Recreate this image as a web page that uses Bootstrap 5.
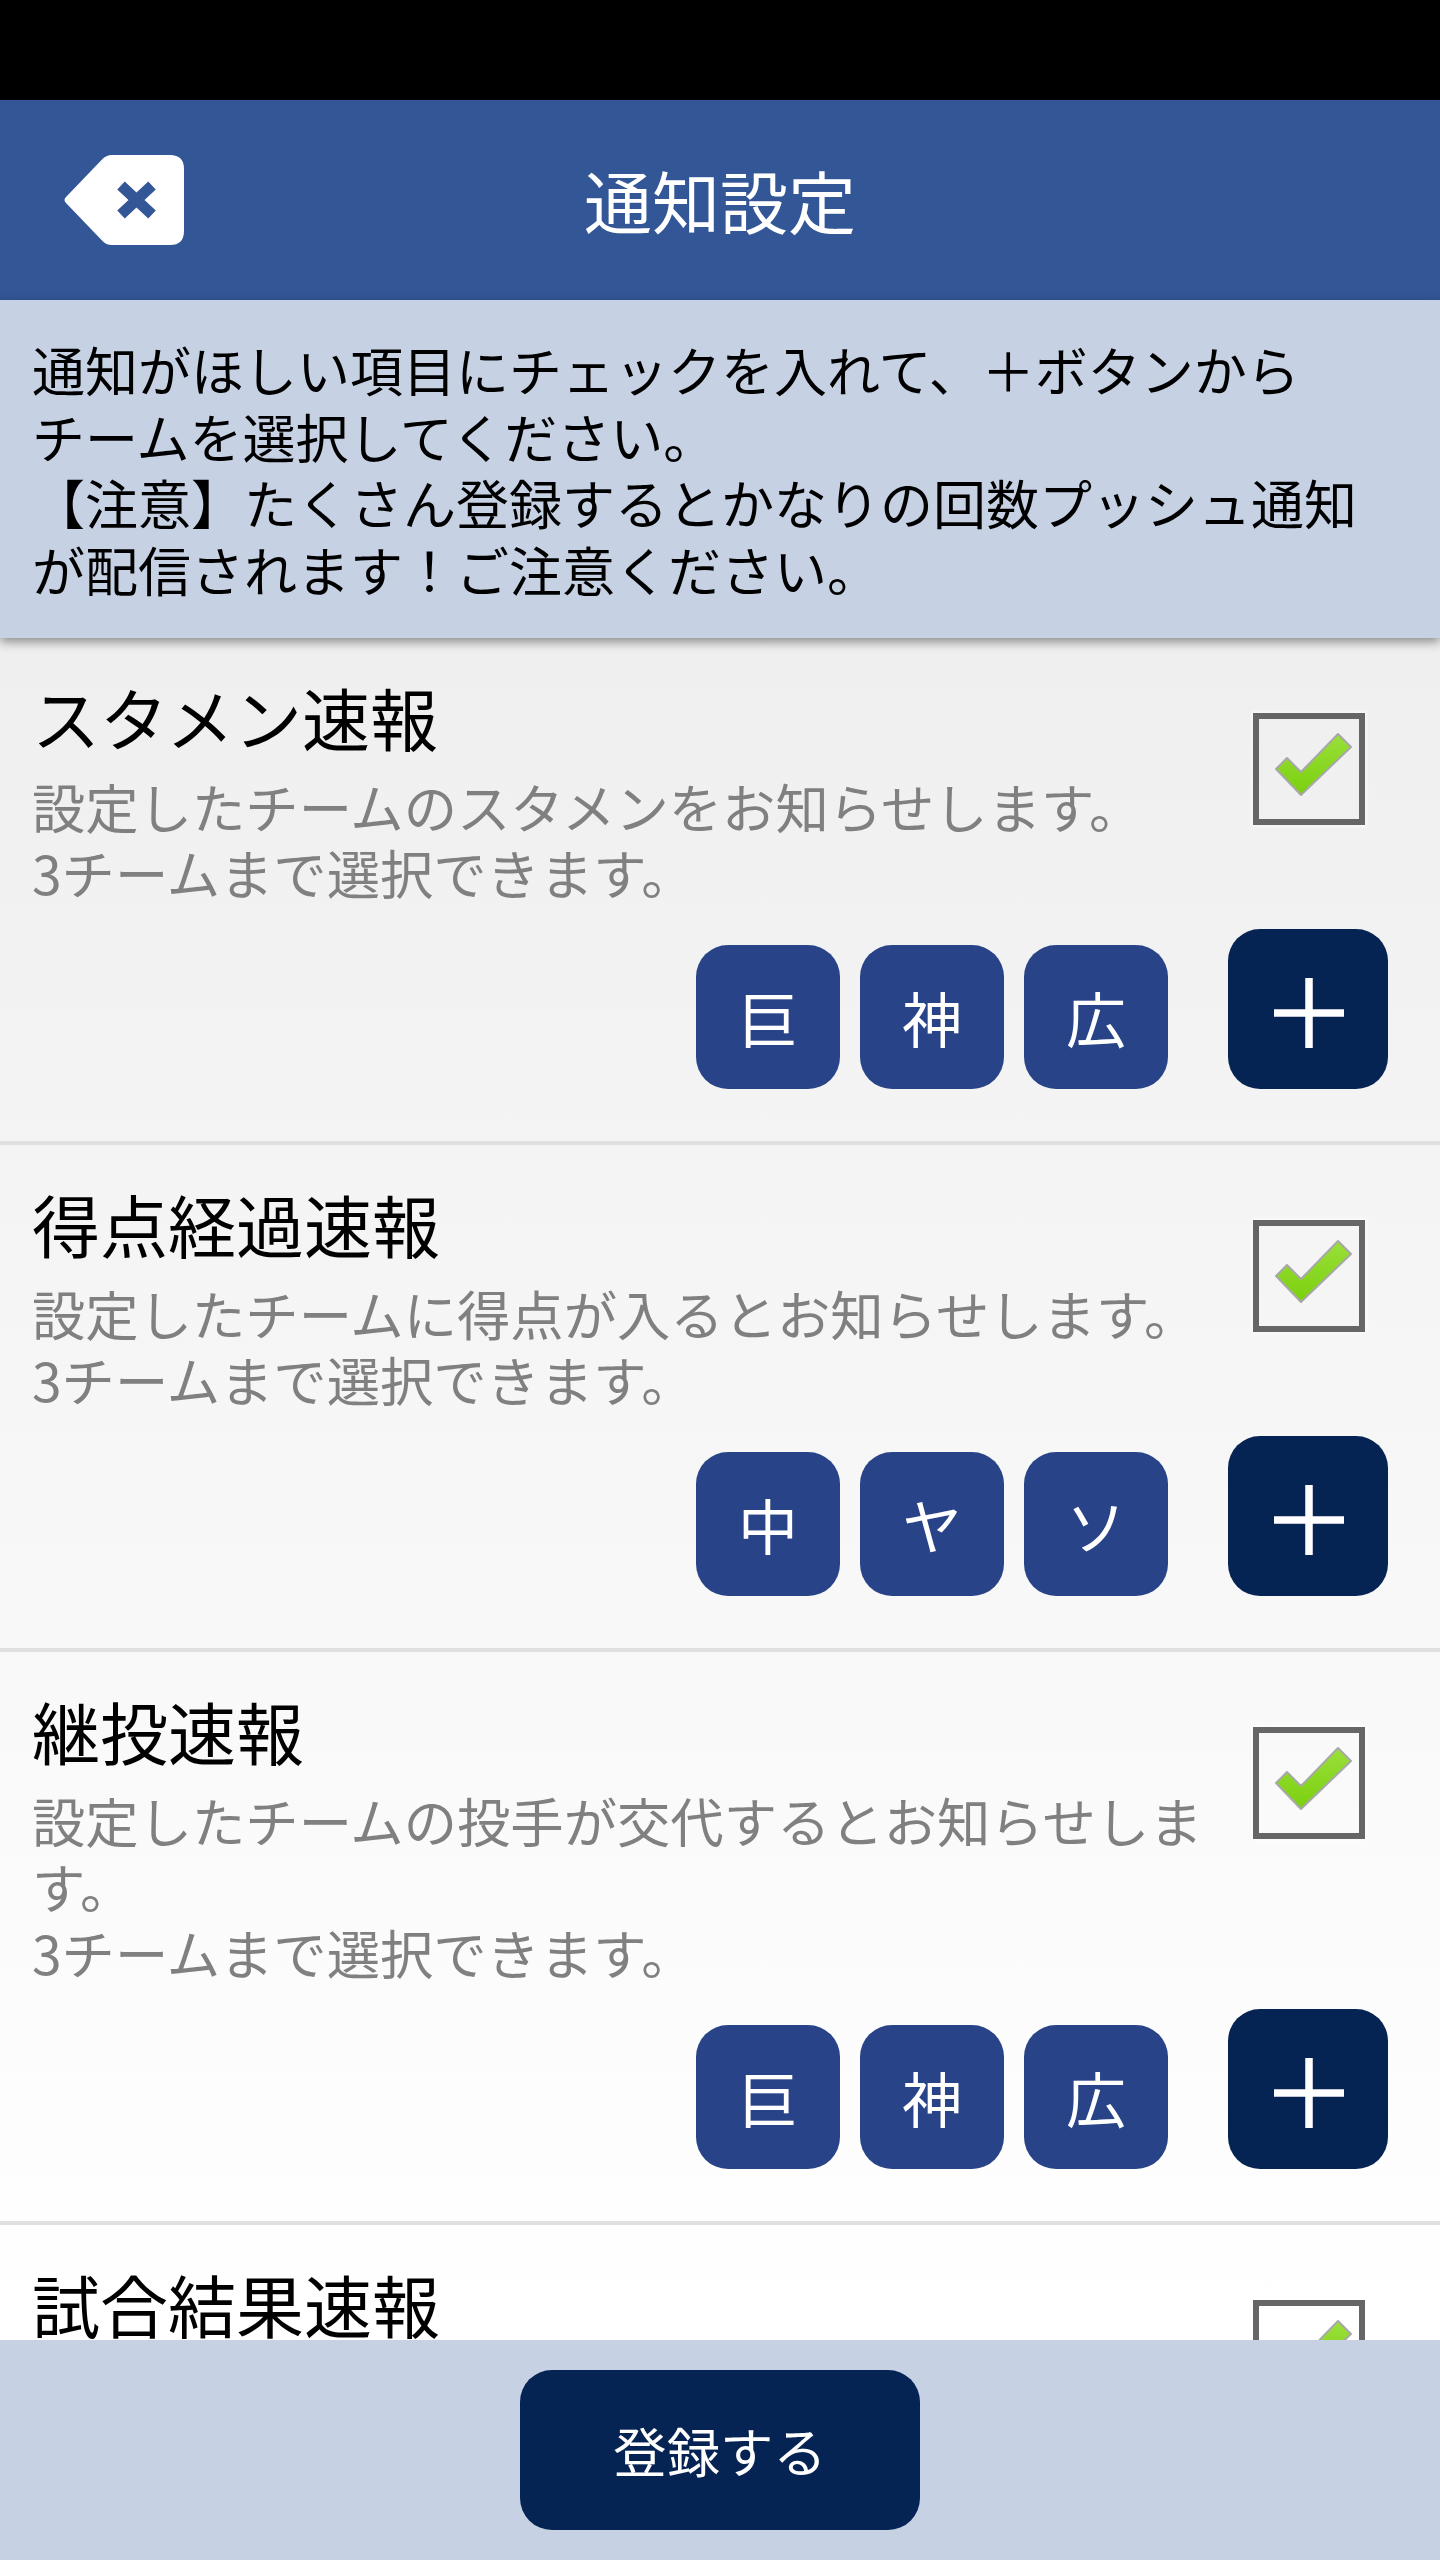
<!DOCTYPE html>
<html lang="ja">
<head>
<meta charset="utf-8">
<title>通知設定</title>
<link href="https://cdn.jsdelivr.net/npm/bootstrap@5.3.0/dist/css/bootstrap.min.css" rel="stylesheet">
<style>
html,body{height:2560px;margin:0;background:#000;}
body{font-family:"Noto Sans CJK JP","Noto Sans",sans-serif;font-size:53.33px;line-height:66px;color:#000;overflow:hidden;}
.app-shell{height:2560px;}
.status-strip{height:100px;background:#000;flex:none;}
.head-bar{height:200px;background:#335696;flex:none;color:#fff;font-size:68px;}
.back-ico{left:64px;top:55px;width:120px;height:90px;}
.head-title{line-height:200px;}
.notice-box{background:#c6d1e4;padding:36px 32px 32px;height:338px;flex:none;font-size:53px;line-height:66.5px;box-shadow:0 4px 10px rgba(0,0,0,.42);z-index:2;}
.item-list{flex:1 1 0;min-height:0;overflow:hidden;background:linear-gradient(180deg,#efefef 0,#ffffff 1700px);}
.notify-item{padding:38px 52px 52px 32px;border-bottom:4px solid #e0e0e0;}
.item-text{width:1200px;}
.item-title{font-size:68px;line-height:82px;margin:0 0 15px;font-weight:400;}
.item-desc{color:#808080;margin:0;}
.check-ico{width:112px;height:112px;margin-top:37px;margin-right:-30px;margin-left:21px;flex:none;box-shadow:0 0 3px 2px rgba(255,255,255,.55);filter:blur(.5px);}
.action-row{margin-top:24px;gap:20px;}
.team-btn{width:144px;height:144px;background:#284387;color:#fff;border:0;border-radius:32px;font-size:60px;line-height:1;padding:0;}
.team-btn:hover{background:#284387;color:#fff;}
.add-btn{width:160px;height:160px;background:#052353;border:0;border-radius:32px;margin-left:40px;padding:0;}
.add-btn:hover{background:#052353;}
.add-btn svg{margin-top:8px;margin-left:2px;}
.foot-bar{height:220px;background:#c6d1e4;flex:none;padding-top:30px;z-index:3;}
.save-btn{width:400px;height:160px;background:#052353;color:#fff;border:0;border-radius:32px;font-size:53.33px;padding:0;}
.save-btn:hover{background:#052353;color:#fff;}
</style>
</head>
<body>
<div class="app-shell d-flex flex-column">
  <div class="status-strip"></div>
  <header class="head-bar position-relative text-center">
    <svg class="back-ico position-absolute" viewBox="0 0 120 90" aria-label="戻る">
      <path fill="#fff" d="M38 4.500Q42 0 48 0H106Q120 0 120 14V76Q120 90 106 90H48Q42 90 38 85.500L2 48Q-1 45 2 42Z"/>
      <path stroke="#335696" stroke-width="11" fill="none" d="M57 30.500 88 59.500M88 30.500 57 59.500"/>
    </svg>
    <div class="head-title">通知設定</div>
  </header>
  <section class="notice-box position-relative">
    通知がほしい項目にチェックを入れて、＋ボタンから<br>チームを選択してください。<br>【注意】たくさん登録するとかなりの回数プッシュ通知が配信されます！ご注意ください。
  </section>
  <main class="item-list">

    <div class="notify-item">
      <div class="d-flex align-items-start">
        <div class="item-text">
          <h2 class="item-title">スタメン速報</h2>
          <p class="item-desc">設定したチームのスタメンをお知らせします。<br>3チームまで選択できます。</p>
        </div>
        <svg class="check-ico" viewBox="0 0 112 112"><rect x="3" y="3" width="106" height="106" fill="none" stroke="#666" stroke-width="6"/><defs><linearGradient id="g1" x1="0" y1="0" x2="0" y2="1"><stop offset="0" stop-color="#9adf3a"/><stop offset="1" stop-color="#7bd00e"/></linearGradient></defs><path fill="url(#g1)" stroke="#a8a8a8" stroke-width="2" stroke-linejoin="round" d="M23 56 34 45 48 59 85 21 98 34 48 82Z"/></svg>
      </div>
      <div class="action-row d-flex justify-content-end align-items-end">
        <button class="btn team-btn" type="button">巨</button>
        <button class="btn team-btn" type="button">神</button>
        <button class="btn team-btn" type="button">広</button>
        <button class="btn add-btn d-flex align-items-center justify-content-center" type="button" aria-label="追加"><svg width="70" height="70" viewBox="0 0 70 70"><path d="M35 0V70M0 35H70" stroke="#fff" stroke-width="7.500"/></svg></button>
      </div>
    </div>

    <div class="notify-item">
      <div class="d-flex align-items-start">
        <div class="item-text">
          <h2 class="item-title">得点経過速報</h2>
          <p class="item-desc">設定したチームに得点が入るとお知らせします。<br>3チームまで選択できます。</p>
        </div>
        <svg class="check-ico" viewBox="0 0 112 112"><rect x="3" y="3" width="106" height="106" fill="none" stroke="#666" stroke-width="6"/><path fill="url(#g1)" stroke="#a8a8a8" stroke-width="2" stroke-linejoin="round" d="M23 56 34 45 48 59 85 21 98 34 48 82Z"/></svg>
      </div>
      <div class="action-row d-flex justify-content-end align-items-end">
        <button class="btn team-btn" type="button">中</button>
        <button class="btn team-btn" type="button">ヤ</button>
        <button class="btn team-btn" type="button">ソ</button>
        <button class="btn add-btn d-flex align-items-center justify-content-center" type="button" aria-label="追加"><svg width="70" height="70" viewBox="0 0 70 70"><path d="M35 0V70M0 35H70" stroke="#fff" stroke-width="7.500"/></svg></button>
      </div>
    </div>

    <div class="notify-item">
      <div class="d-flex align-items-start">
        <div class="item-text">
          <h2 class="item-title">継投速報</h2>
          <p class="item-desc">設定したチームの投手が交代するとお知らせします。<br>3チームまで選択できます。</p>
        </div>
        <svg class="check-ico" viewBox="0 0 112 112"><rect x="3" y="3" width="106" height="106" fill="none" stroke="#666" stroke-width="6"/><path fill="url(#g1)" stroke="#a8a8a8" stroke-width="2" stroke-linejoin="round" d="M23 56 34 45 48 59 85 21 98 34 48 82Z"/></svg>
      </div>
      <div class="action-row d-flex justify-content-end align-items-end">
        <button class="btn team-btn" type="button">巨</button>
        <button class="btn team-btn" type="button">神</button>
        <button class="btn team-btn" type="button">広</button>
        <button class="btn add-btn d-flex align-items-center justify-content-center" type="button" aria-label="追加"><svg width="70" height="70" viewBox="0 0 70 70"><path d="M35 0V70M0 35H70" stroke="#fff" stroke-width="7.500"/></svg></button>
      </div>
    </div>

    <div class="notify-item">
      <div class="d-flex align-items-start">
        <div class="item-text">
          <h2 class="item-title">試合結果速報</h2>
        </div>
        <svg class="check-ico" viewBox="0 0 112 112"><rect x="3" y="3" width="106" height="106" fill="none" stroke="#666" stroke-width="6"/><path fill="url(#g1)" stroke="#a8a8a8" stroke-width="2" stroke-linejoin="round" d="M23 56 34 45 48 59 85 21 98 34 48 82Z"/></svg>
      </div>
    </div>

  </main>
  <footer class="foot-bar text-center">
    <button class="btn save-btn" type="button">登録する</button>
  </footer>
</div>
<script src="https://cdn.jsdelivr.net/npm/bootstrap@5.3.0/dist/js/bootstrap.bundle.min.js"></script>
</body>
</html>
